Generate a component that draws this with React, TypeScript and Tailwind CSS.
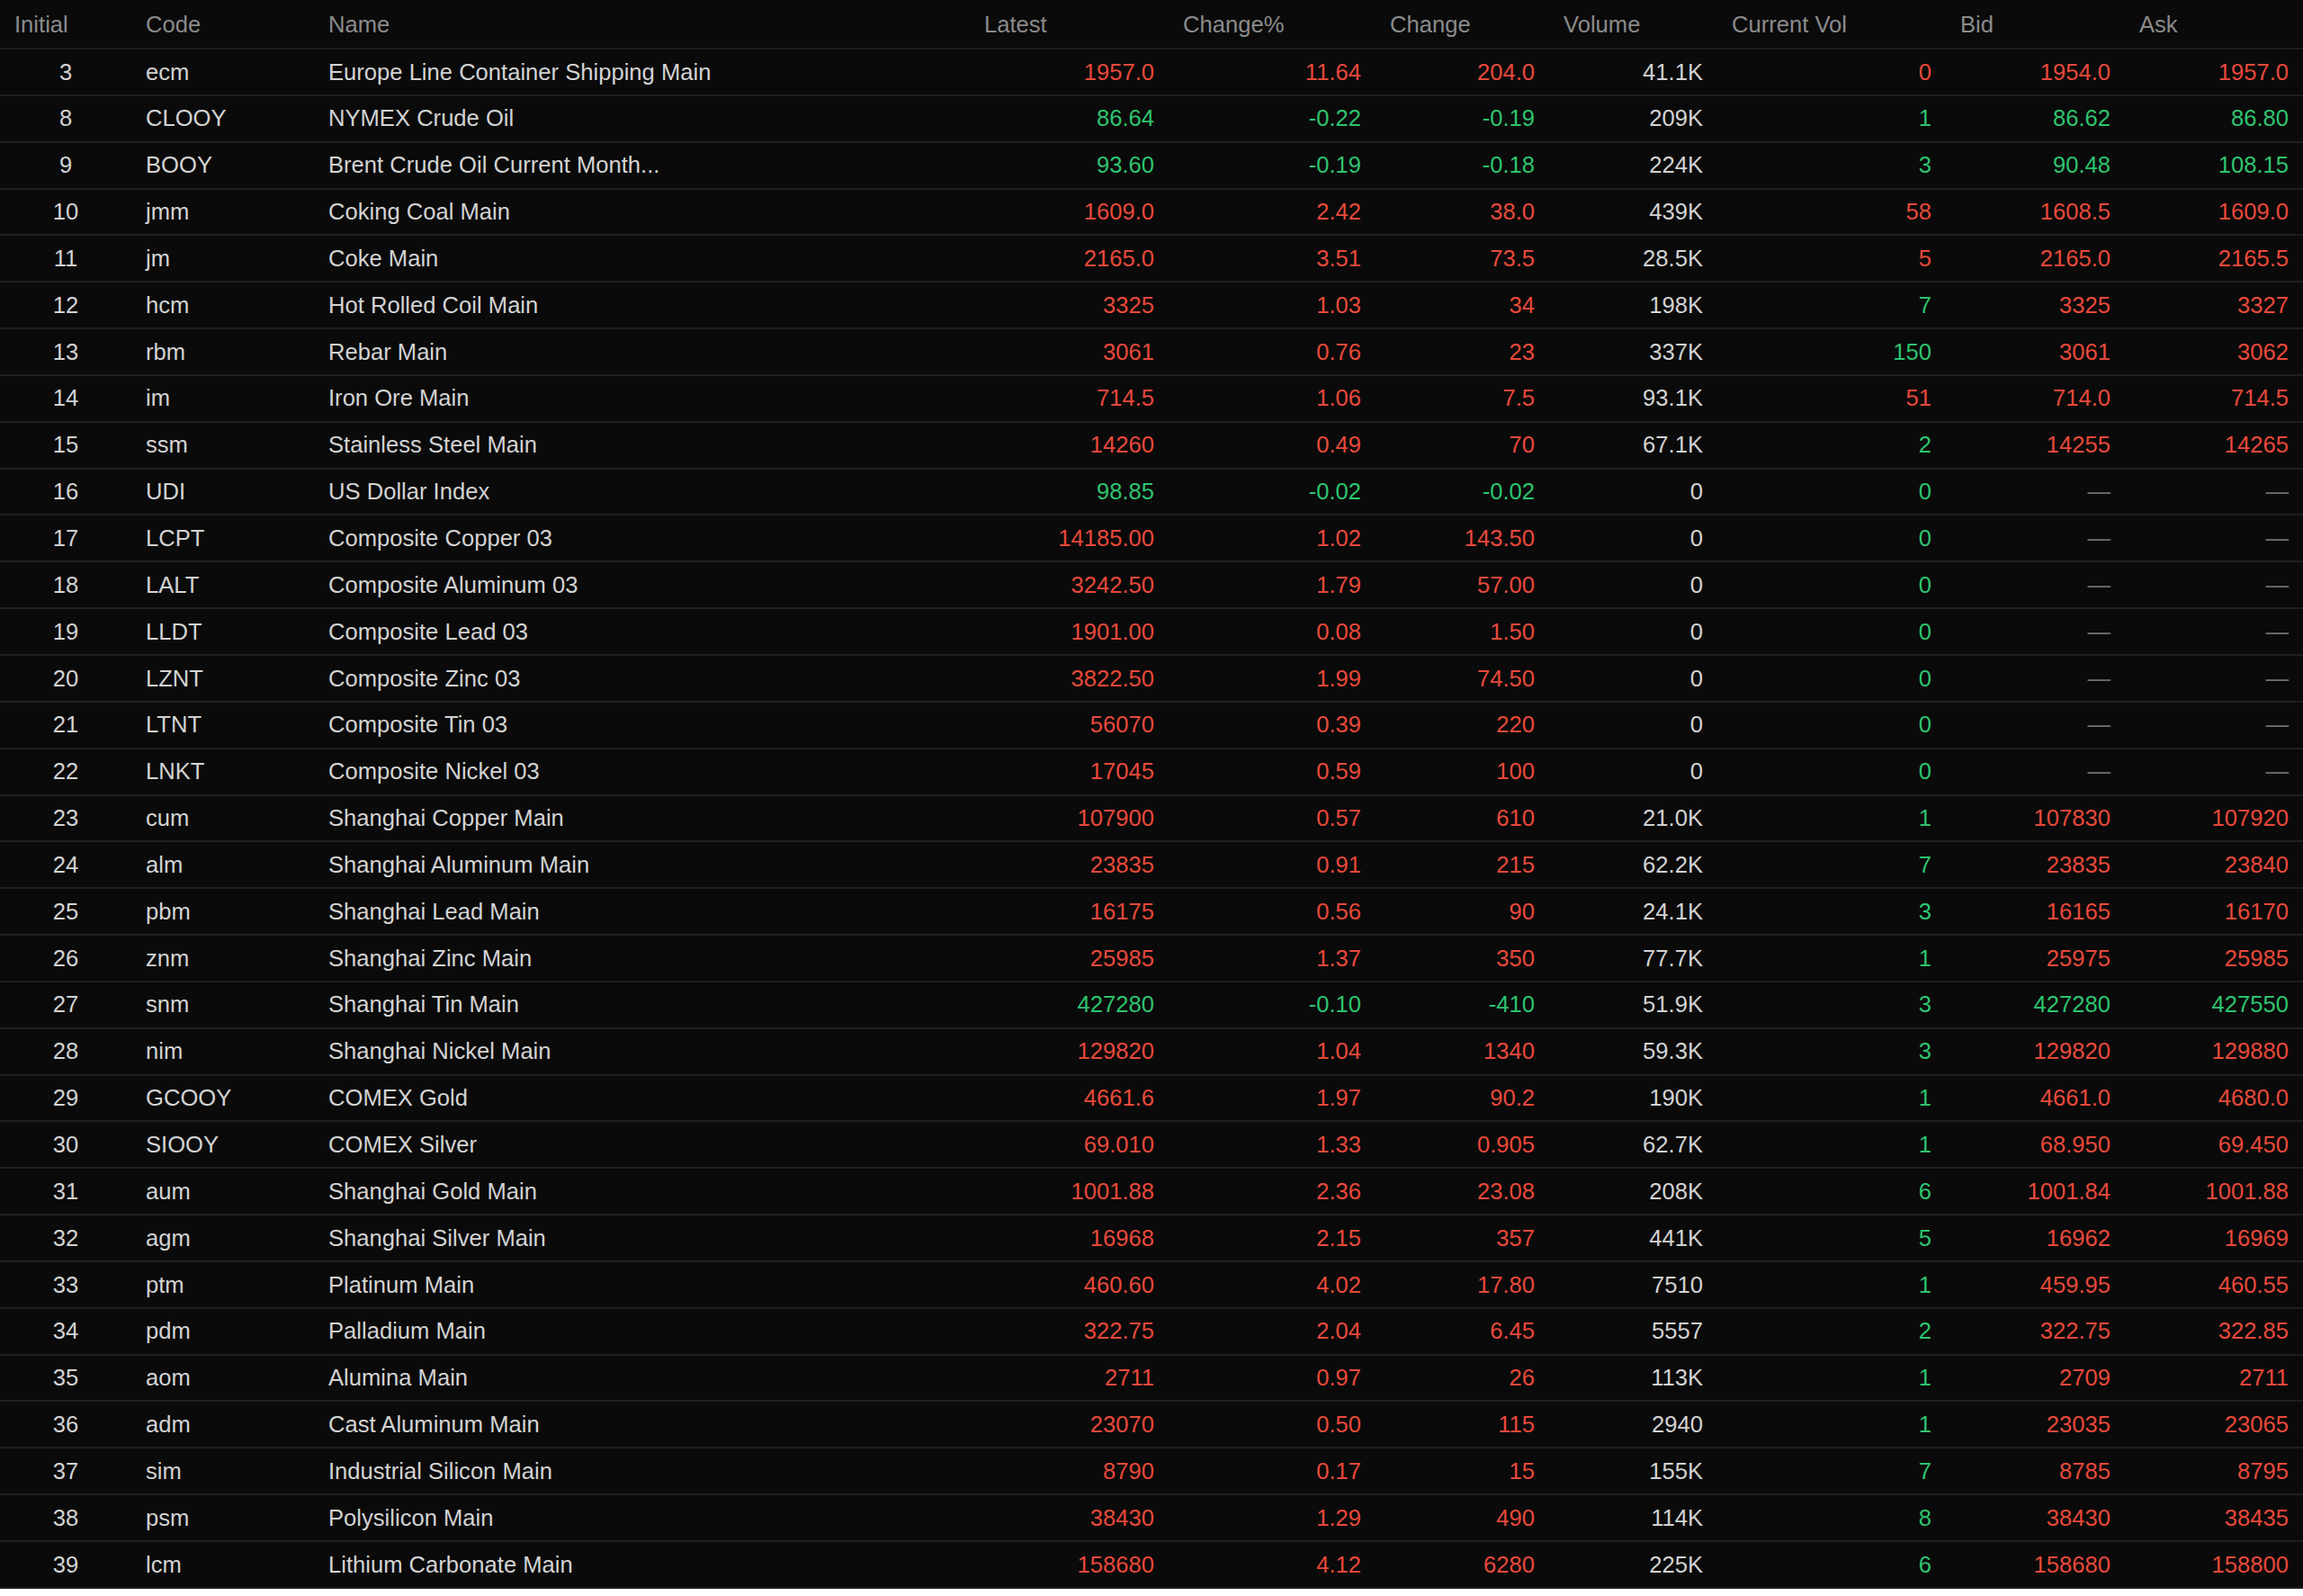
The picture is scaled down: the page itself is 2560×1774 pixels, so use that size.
import { memo } from 'react';

type Quote = {
  idx: number;
  code: string;
  name: string;
  latest: string;
  pct: string;
  chg: string;
  volume: string;
  curVol: string;
  curUp: boolean;
  bid: string;
  ask: string;
  up: boolean;
};

const q = (
  idx: number,
  code: string,
  name: string,
  latest: string,
  pct: string,
  chg: string,
  volume: string,
  curVol: string,
  curUp: boolean,
  bid: string,
  ask: string
): Quote => ({ idx, code, name, latest, pct, chg, volume, curVol, curUp, bid, ask, up: !pct.startsWith('-') });

const quotes: Quote[] = [
  q(3, 'ecm', 'Europe Line Container Shipping Main', '1957.0', '11.64', '204.0', '41.1K', '0', true, '1954.0', '1957.0'),
  q(8, 'CLOOY', 'NYMEX Crude Oil', '86.64', '-0.22', '-0.19', '209K', '1', false, '86.62', '86.80'),
  q(9, 'BOOY', 'Brent Crude Oil Current Month...', '93.60', '-0.19', '-0.18', '224K', '3', false, '90.48', '108.15'),
  q(10, 'jmm', 'Coking Coal Main', '1609.0', '2.42', '38.0', '439K', '58', true, '1608.5', '1609.0'),
  q(11, 'jm', 'Coke Main', '2165.0', '3.51', '73.5', '28.5K', '5', true, '2165.0', '2165.5'),
  q(12, 'hcm', 'Hot Rolled Coil Main', '3325', '1.03', '34', '198K', '7', false, '3325', '3327'),
  q(13, 'rbm', 'Rebar Main', '3061', '0.76', '23', '337K', '150', false, '3061', '3062'),
  q(14, 'im', 'Iron Ore Main', '714.5', '1.06', '7.5', '93.1K', '51', true, '714.0', '714.5'),
  q(15, 'ssm', 'Stainless Steel Main', '14260', '0.49', '70', '67.1K', '2', false, '14255', '14265'),
  q(16, 'UDI', 'US Dollar Index', '98.85', '-0.02', '-0.02', '0', '0', false, '', ''),
  q(17, 'LCPT', 'Composite Copper 03', '14185.00', '1.02', '143.50', '0', '0', false, '', ''),
  q(18, 'LALT', 'Composite Aluminum 03', '3242.50', '1.79', '57.00', '0', '0', false, '', ''),
  q(19, 'LLDT', 'Composite Lead 03', '1901.00', '0.08', '1.50', '0', '0', false, '', ''),
  q(20, 'LZNT', 'Composite Zinc 03', '3822.50', '1.99', '74.50', '0', '0', false, '', ''),
  q(21, 'LTNT', 'Composite Tin 03', '56070', '0.39', '220', '0', '0', false, '', ''),
  q(22, 'LNKT', 'Composite Nickel 03', '17045', '0.59', '100', '0', '0', false, '', ''),
  q(23, 'cum', 'Shanghai Copper Main', '107900', '0.57', '610', '21.0K', '1', false, '107830', '107920'),
  q(24, 'alm', 'Shanghai Aluminum Main', '23835', '0.91', '215', '62.2K', '7', false, '23835', '23840'),
  q(25, 'pbm', 'Shanghai Lead Main', '16175', '0.56', '90', '24.1K', '3', false, '16165', '16170'),
  q(26, 'znm', 'Shanghai Zinc Main', '25985', '1.37', '350', '77.7K', '1', false, '25975', '25985'),
  q(27, 'snm', 'Shanghai Tin Main', '427280', '-0.10', '-410', '51.9K', '3', false, '427280', '427550'),
  q(28, 'nim', 'Shanghai Nickel Main', '129820', '1.04', '1340', '59.3K', '3', false, '129820', '129880'),
  q(29, 'GCOOY', 'COMEX Gold', '4661.6', '1.97', '90.2', '190K', '1', false, '4661.0', '4680.0'),
  q(30, 'SIOOY', 'COMEX Silver', '69.010', '1.33', '0.905', '62.7K', '1', false, '68.950', '69.450'),
  q(31, 'aum', 'Shanghai Gold Main', '1001.88', '2.36', '23.08', '208K', '6', false, '1001.84', '1001.88'),
  q(32, 'agm', 'Shanghai Silver Main', '16968', '2.15', '357', '441K', '5', false, '16962', '16969'),
  q(33, 'ptm', 'Platinum Main', '460.60', '4.02', '17.80', '7510', '1', false, '459.95', '460.55'),
  q(34, 'pdm', 'Palladium Main', '322.75', '2.04', '6.45', '5557', '2', false, '322.75', '322.85'),
  q(35, 'aom', 'Alumina Main', '2711', '0.97', '26', '113K', '1', false, '2709', '2711'),
  q(36, 'adm', 'Cast Aluminum Main', '23070', '0.50', '115', '2940', '1', false, '23035', '23065'),
  q(37, 'sim', 'Industrial Silicon Main', '8790', '0.17', '15', '155K', '7', false, '8785', '8795'),
  q(38, 'psm', 'Polysilicon Main', '38430', '1.29', '490', '114K', '8', false, '38430', '38435'),
  q(39, 'lcm', 'Lithium Carbonate Main', '158680', '4.12', '6280', '225K', '6', false, '158680', '158800'),
];

const columns = ['Initial', 'Code', 'Name', 'Latest', 'Change%', 'Change', 'Volume', 'Current Vol', 'Bid', 'Ask'];

const gridCols =
  'grid grid-cols-[146px_203px_729px_221px_230px_193px_187px_254px_199px_198px] items-center';

const RED = 'text-[#e8493b]';
const GREEN = 'text-[#2ec46f]';

const Price = ({ value, up }: { value: string; up: boolean }) =>
  value ? (
    <div className={`px-4 text-right ${up ? RED : GREEN}`}>{value}</div>
  ) : (
    <div className="px-4 text-right text-[#6e6e6e]">—</div>
  );

const QuoteRow = memo(({ row }: { row: Quote }) => {
  const tone = row.up ? RED : GREEN;
  return (
    <div className={`${gridCols} h-[51.85px] border-b-2 border-[#1f1f1f]`}>
      <div className="px-4 text-center">{row.idx}</div>
      <div className="px-4">{row.code}</div>
      <div className="px-4 whitespace-nowrap">{row.name}</div>
      <div className={`px-4 text-right ${tone}`}>{row.latest}</div>
      <div className={`px-4 text-right ${tone}`}>{row.pct}</div>
      <div className={`px-4 text-right ${tone}`}>{row.chg}</div>
      <div className="px-4 text-right">{row.volume}</div>
      <div className={`px-4 text-right ${row.curUp ? RED : GREEN}`}>{row.curVol}</div>
      <Price value={row.bid} up={row.up} />
      <Price value={row.ask} up={row.up} />
    </div>
  );
});

QuoteRow.displayName = 'QuoteRow';

export default function App() {
  return (
    <div className="w-[2560px] bg-[#0a0a0a] font-['Liberation_Sans',Arial,sans-serif] text-[25.6px] leading-[1.2] text-[#d3d3d3]">
      <div className={`${gridCols} h-[55px] pt-[1px] border-b-2 border-[#1f1f1f] text-[#8b8b8b]`}>
        {columns.map((col) => (
          <div key={col} className="px-4 text-left whitespace-nowrap">
            {col}
          </div>
        ))}
      </div>
      {quotes.map((row) => (
        <QuoteRow key={row.idx} row={row} />
      ))}
    </div>
  );
}
